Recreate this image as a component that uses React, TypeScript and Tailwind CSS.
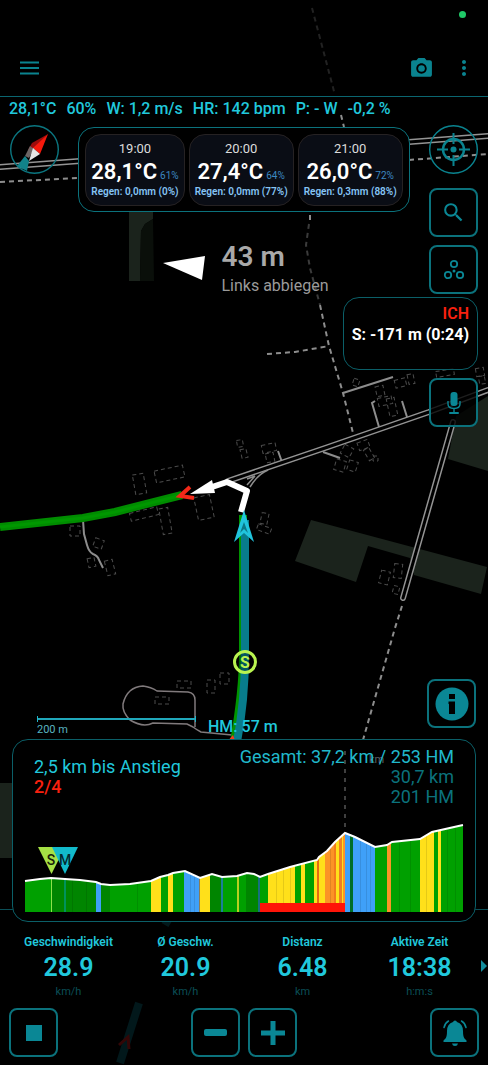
import React from "react";
import { MdCameraAlt, MdMoreVert, MdSearch } from "react-icons/md";

const forecast = [
  { time: "19:00", temp: "28,1°C", humidity: "61%", rain: "Regen: 0,0mm (0%)" },
  { time: "20:00", temp: "27,4°C", humidity: "64%", rain: "Regen: 0,0mm (77%)" },
  { time: "21:00", temp: "26,0°C", humidity: "72%", rain: "Regen: 0,3mm (88%)" },
];

const sensors = ["28,1°C", "60%", "W: 1,2 m/s", "HR: 142 bpm", "P: - W", "-0,2 %"];

const metrics = [
  { label: "Geschwindigkeit", value: "28.9", unit: "km/h" },
  { label: "Ø Geschw.", value: "20.9", unit: "km/h" },
  { label: "Distanz", value: "6.48", unit: "km" },
  { label: "Aktive Zeit", value: "18:38", unit: "h:m:s" },
];

// Building outlines: x, y, width, height, rotation
const buildings: number[][] = [
  [134, 474, 11, 20, -10], [155, 468, 29, 12, -12], [196, 496, 16, 23, -12],
  [130, 510, 28, 8, -14], [161, 508, 9, 26, -10], [70, 526, 10, 10, 0],
  [94, 539, 9, 9, 20], [88, 558, 7, 9, -12], [106, 560, 8, 15, -14],
  [237, 440, 6, 7, -10], [241, 449, 6, 9, -14], [262, 444, 14, 8, -12], [266, 453, 8, 9, -12],
  [261, 513, 7, 11, 12], [257, 526, 14, 6, 20], [342, 446, 10, 10, 28], [358, 441, 11, 8, -20],
  [335, 460, 10, 11, 16], [348, 461, 9, 10, 18], [366, 448, 6, 12, -30], [373, 456, 5, 5, 0],
  [376, 386, 8, 10, -12], [378, 397, 14, 8, -12], [388, 398, 8, 18, -12], [395, 379, 11, 8, -14],
  [408, 374, 6, 10, -12], [353, 379, 6, 7, 18], [436, 370, 18, 6, -10], [476, 368, 8, 8, -10],
  [479, 376, 6, 8, -10], [380, 571, 9, 13, 14], [394, 564, 8, 14, 6], [393, 586, 6, 8, 14],
  [177, 681, 14, 7, 0], [155, 697, 14, 7, 0], [207, 680, 8, 13, 0], [220, 673, 9, 11, 0],
];

const dark = "#008500";
const green = "#00a000";
const yellow = "#ffe01a";
const blue = "#3fa0f8";
const orange = "#fb9426";

// Slope bands of the elevation profile: start, end, colour
const bands: [number, number, string][] = [
  [25, 51, green], [51, 52, "#8fe04a"], [52, 64, dark], [64, 66, "#00935c"], [66, 96, dark],
  [96, 101, blue], [101, 110, dark], [110, 151, green], [151, 161, yellow], [161, 168, green],
  [168, 173, yellow], [173, 184, green], [184, 199, blue], [199, 200, "#8b7d55"],
  [200, 210, yellow], [210, 221, dark], [221, 223, "#1c7f9a"], [223, 237, green],
  [237, 239, "#b8d020"], [239, 246, green], [246, 258, dark], [258, 260, "#16707f"],
  [260, 268, green], [268, 295, yellow], [295, 301, green], [301, 305, yellow],
  [305, 314, green], [314, 317, yellow], [317, 319, "#e56b12"], [319, 325, yellow],
  [325, 334, orange], [334, 336, "#f27b1c"], [336, 339, yellow], [339, 342, "#ef7f20"],
  [342, 343, yellow], [343, 345, orange], [345, 350, blue], [350, 353, "#006e28"],
  [353, 375, blue], [375, 387, green], [387, 391, orange], [391, 420, green],
  [420, 434, yellow], [434, 438, green], [438, 441, yellow], [441, 463, green],
];

const profile =
  "25,881 40,879 51,878 65,879 80,880 96,882 101,884 110,885 130,884 151,881 160,877 168,875 173,873 185,871 200,878 212,874 222,877 237,876 247,873 254,874 260,877 268,874 290,867 317,860 319,857 327,851 335,842 345,833 355,837 375,847 387,845 392,842 420,839 432,832 463,825";

function MapCanvas() {
  return (
    <svg
      aria-hidden="true"
      className="absolute inset-0 h-full w-full"
      viewBox="0 0 488 1065"
      preserveAspectRatio="xMidYMid slice"
      fill="none"
    >
      <g fill="#1b231c">
        <polygon points="311,520 487,567 481,594 414,575 410,558 368,546 356,582 295,561" />
        <polygon points="456,416 488,396 488,471 448,459" />
        <polygon points="129,211 153,211 153,219 145,224 141,231 140,281 129,281" />
        <polygon fill="#0a0f0a" points="153,219 145,224 141,231 140,281 154,281" />
        <rect x="0" y="783" width="14" height="75" />
      </g>
      <g stroke="#4c4c4c" strokeDasharray="4 3">
        {buildings.map(([x, y, w, h, r], i) => (
          <rect key={i} x={x} y={y} width={w} height={h} transform={`rotate(${r} ${x + w / 2} ${y + h / 2})`} />
        ))}
      </g>
      <g stroke="#8d8d8d" strokeWidth="2">
        <path d="M83 520 84 534 87 545Q89 552 93 554 98 556 99 560L103 568" />
        <path d="M343 393 393 377M379 427 372 403 375 401M407 417 402 401M282 462 278 451M323 452 340 458" />
        <path strokeWidth="1.5" stroke="#807a7c" d="M232 735 201 732Q197 730 193 727L187 724 153 723Q143 728 130 720 122 712 123 704 127 687 143 686 151 687 157 691L188 692Q195 693 195 700V727" />
      </g>
      <g stroke="#8d8d8d" strokeWidth="2" strokeDasharray="5 4">
        <path d="M0 182 78 178M409 160 488 154" />
        <path d="M267 354 295 352 329 346M320 305 329 346 343 393 353 433" />
        <path d="M402 606 395 628 363 740" />
        <path stroke="#222" d="M312 8 321 42 335 95" />
        <path d="M341 115 344 127M310 215V221" />
        <path stroke="#3b3b3b" d="M309 224 306 245 310 268 320 305" />
      </g>
      <path stroke="#949494" strokeWidth="6" d="M0 167 80 161M409 142 488 136M228 481 328 447 429 412 488 390M453 422 403 598" strokeLinecap="round" />
      <path stroke="#000" strokeWidth="3" d="M0 167 80 161M409 142 488 136M228 481 328 447 429 412 488 390M453 422 403 598" strokeLinecap="round" />
      <path stroke="#8d8d8d" strokeWidth="1.5" d="M268 470Q258 474 250 487M255 476 247 479M255 476 247 485" />
      <path stroke="#008c00" strokeWidth="8" d="M0 527 83 518 115 512 182 495" />
      <path stroke="#00a300" strokeWidth="3" d="M0 527 83 518 115 512 182 495" opacity=".5" />
      <path stroke="#009400" strokeWidth="8" d="M243 515V655Q243 690 234 742" />
      <path stroke="#087c8c" strokeWidth="8" d="M245 520V655Q245 700 237 742" />
      <path stroke="#fff" strokeWidth="6" strokeLinejoin="round" d="M212 487 227 482 247 491 241 512" />
      <polygon fill="#fff" points="190,494 212,480 215,493" />
      <path stroke="#f22818" strokeWidth="4" d="M190 487 180 496 194 498" />
      <path fill="#20c4dd" d="M244 510 254 542 244 533 234 542Z" />
      <path fill="#0a7888" d="M244 522 248 533 244 529 240 533Z" />
      <circle cx="245" cy="662" r="10.5" fill="#000" fillOpacity=".3" stroke="#b9f34f" strokeWidth="3" />
      <text x="245" y="668" textAnchor="middle" fill="#b9f34f" fontSize="16" fontWeight="700">S</text>
      <polygon fill="#f23a22" points="226,743 233,735 236,743" />
      <g opacity=".2">
        <path stroke="#0a7888" strokeWidth="8" d="M168 920 165 925M139 1003 120 1063" />
        <path stroke="#f22" strokeWidth="3" d="M119 1045 128 1037 129 1049" />
      </g>
    </svg>
  );
}

const squareButton =
  "flex size-[49px] shrink-0 items-center justify-center rounded-lg border-2 border-[#0b727c] bg-black/80 text-[#0a8795]";

function SquareButton({ label, children }: { label: string; children: React.ReactNode }) {
  return (
    <button type="button" aria-label={label} className={squareButton}>
      {children}
    </button>
  );
}

function Compass() {
  return (
    <button type="button" aria-label="Kompass" className="size-[49px] shrink-0">
      <svg viewBox="10 125 49 49" className="size-full" fill="none">
        <circle cx="34.5" cy="149.500" r="23.800" stroke="#0b7680" strokeWidth="1.4" />
        <polygon fill="#9c0c0c" points="48,134 32,143 28,150 34,149" />
        <polygon fill="#f5190c" points="48,134 33,148 40,154" />
        <polygon fill="#6c6665" points="30,146 34,149 29,158 25,156" />
        <polygon fill="#e4e4e4" points="33,148 40,154 29,161" />
        <polygon fill="#11828a" points="25,156 29,161 27,171 17,166" />
      </svg>
    </button>
  );
}

function TargetIcon() {
  return (
    <svg viewBox="0 0 49 49" className="size-full" fill="none" stroke="#0a838f">
      <circle cx="24.500" cy="24.500" r="23.800" strokeWidth="1.4" />
      <circle cx="24.500" cy="24.500" r="10.500" strokeWidth="2.400" />
      <circle cx="24.500" cy="24.500" r="3" fill="#0a838f" stroke="none" />
      <path strokeWidth="2" d="M24.500 8V19M24.500 30V41M8 24.500H19M30 24.500H41" />
    </svg>
  );
}

function ElevationChart() {
  return (
    <svg viewBox="13 740 462 181" className="block h-auto w-full [grid-area:1/1]" fill="none" role="img" aria-label="Höhenprofil">
      <defs>
        <clipPath id="profile-area">
          <polygon points={`25,912 ${profile} 463,912`} />
        </clipPath>
      </defs>
      <g clipPath="url(#profile-area)" shapeRendering="crispEdges">
        {bands.map(([from, to, color]) => (
          <rect key={from} x={from} y="820" width={to - from} height="92" fill={color} />
        ))}
        <path stroke="#000" strokeOpacity=".1" d="M72 870V912M86 870V912M137 870V912M190 870V912M194 870V912M276 860V912M283 860V912M290 860V912M330 840V912M360 830V912M366 830V912M370 830V912M399 830V912M410 830V912M426 830V912M447 830V912M455 820V912" />
      </g>
      <rect x="260" y="903" width="85" height="9" fill="#ff1408" />
      <polyline points={profile} stroke="#fff" strokeWidth="2" />
      <path d="M345 751V832" stroke="#555" strokeWidth="1.500" strokeDasharray="4 5" />
      <text x="369" y="763" fill="#5b6164" fontSize="11">km</text>
      <polygon points="38,847 65,847 51.500,874" fill="#a5e145" />
      <polygon points="52,847 78,847 65,874" fill="#12bacb" />
      <text x="51" y="865" textAnchor="middle" fill="#16200a" fontSize="14" fontWeight="500">S</text>
      <text x="65" y="865" textAnchor="middle" fill="#042a30" fontSize="14" fontWeight="500">M</text>
    </svg>
  );
}

export default function App() {
  return (
    <div className="relative flex min-h-screen flex-col overflow-hidden bg-black font-[Roboto,'Liberation_Sans',sans-serif] text-[#20c8dc]">
      <MapCanvas />
      <span className="absolute top-[11px] right-[22px] size-[7px] rounded-full bg-[#20c968]" />

      <header className="relative border-b border-[#0b6670] pt-10">
        <div className="flex h-14 items-center justify-between pr-3 pl-5 text-[#0a838f]">
          <button type="button" aria-label="Menü">
            <svg viewBox="0 0 19 14" className="w-[19px]" stroke="currentColor" strokeWidth="2">
              <path d="M0 1.500H19M0 7H19M0 12.500H19" />
            </svg>
          </button>
          <div className="flex items-center gap-[18px]">
            <button type="button" aria-label="Kamera"><MdCameraAlt size={25} /></button>
            <button type="button" aria-label="Mehr"><MdMoreVert size={24} /></button>
          </div>
        </div>
      </header>

      <div className="relative flex h-6 items-center gap-[10px] pl-[9px] text-base font-medium whitespace-nowrap">
        {sensors.map((s) => (
          <span key={s}>{s}</span>
        ))}
      </div>

      <main className="relative flex flex-1 flex-col pt-1">
        <div className="flex justify-between pr-[10px] pl-[10px]">
          <Compass />
          <div className="flex flex-col items-center pt-[2px]">
            <section aria-label="Wetter" className="flex gap-1 rounded-2xl border border-[#0b727c] bg-black p-[6px] pb-[5px]">
              {forecast.map((f) => (
                <div key={f.time} className="flex flex-col items-center rounded-2xl border border-[#262223] bg-[#0a0d15] px-[5px] pt-1 pb-[6px] whitespace-nowrap">
                  <span className="text-[13px] leading-[20px] text-[#dcdcdc]">{f.time}</span>
                  <span className="flex items-baseline gap-[3px] text-[22px] leading-[26px] font-semibold text-white">
                    {f.temp}
                    <span className="text-[10px] leading-3 font-normal text-[#3c88c0]">{f.humidity}</span>
                  </span>
                  <span className="text-[10px] leading-[14px] font-semibold text-[#86c5f5]">{f.rain}</span>
                </div>
              ))}
            </section>
            <section aria-label="Abbiegehinweis" className="mt-[27px] flex items-center gap-4 pl-1">
              <svg viewBox="0 0 42 24" className="w-[42px]" aria-hidden="true">
                <polygon fill="#fff" points="0,7 42,0 39,24" />
              </svg>
              <div className="text-[#9b9b9b]">
                <p className="text-[28px] leading-9 font-semibold text-[#a9a9a9]">43 m</p>
                <p className="text-base leading-[22px]">Links abbiegen</p>
              </div>
            </section>
          </div>
          <div className="flex flex-col">
            <button type="button" aria-label="Zentrieren" className="mb-[14px] size-[49px]"><TargetIcon /></button>
            <SquareButton label="Suchen"><MdSearch size={25} /></SquareButton>
            <div className="h-2" />
            <SquareButton label="Gruppe">
              <svg viewBox="0 0 22 22" className="size-[22px]" fill="none" stroke="currentColor" strokeWidth="1.800">
                <circle cx="11" cy="5" r="3.200" />
                <circle cx="5" cy="16" r="3.200" />
                <circle cx="17" cy="16" r="3.200" />
                <circle cx="11" cy="12" r="1.500" fill="currentColor" stroke="none" />
              </svg>
            </SquareButton>
          </div>
        </div>

        <div className="flex flex-col items-end gap-2 pr-[10px]">
          <section className="h-[73px] rounded-2xl border border-[#0b5f68] bg-black/80 px-2 pt-[5px] text-right text-base leading-[21px] font-bold">
            <p className="font-semibold text-[#f9200f]">ICH</p>
            <p className="text-white">S: -171 m (0:24)</p>
          </section>
          <SquareButton label="Spracheingabe">
            <svg viewBox="0 0 16 24" className="h-6 w-4" fill="none" stroke="currentColor">
              <rect x="4.500" y="1" width="7" height="14" rx="3" fill="currentColor" stroke="none" />
              <path strokeWidth="1.400" d="M2 10V13Q2 17.500 8 17.500T14 13V10M8 17V21" />
              <path strokeWidth="2" strokeLinecap="round" d="M4 22H12" />
            </svg>
          </SquareButton>
        </div>

        <div className="mt-auto flex items-end justify-between pr-3 pl-[37px]">
          <div className="flex items-end gap-3">
            <div className="text-[11px] leading-3 text-[#58b4c0]">
              <div className="mb-[2px] h-1.5 w-[159px] border-x border-[#20b4c8] pt-[2px]">
                <div className="h-[2px] bg-[#20a8bb]" />
              </div>
              <p className="pb-[3px]">200 m</p>
            </div>
            <p className="pb-[2px] text-base leading-5 font-medium">HM: 57 m</p>
          </div>
          <div className="pb-[11px]">
            <SquareButton label="Information">
              <svg viewBox="0 0 34 34" className="size-[34px]">
                <circle cx="17" cy="17" r="16.500" fill="currentColor" />
                <path fill="#000" d="M14 7H20V12H14ZM13.500 14.500H20V27H14V17H13.500Z" />
              </svg>
            </SquareButton>
          </div>
        </div>

        <section className="relative z-10 mx-3 -mb-[13px] grid overflow-hidden rounded-2xl border border-[#0b5f68] bg-black">
          <ElevationChart />
          <div className="flex justify-between px-[21px] pt-[7px] text-lg leading-5 whitespace-nowrap [grid-area:1/1]">
            <div className="pt-[10px]">
              <p>2,5 km bis Anstieg</p>
              <p className="font-medium text-[#f9200f]">2/4</p>
            </div>
            <div className="text-right text-[#0b727c]">
              <p className="text-[#20b8cb]">Gesamt: 37,2 km / 253 HM</p>
              <p>30,7 km</p>
              <p>201 HM</p>
            </div>
          </div>
        </section>
      </main>

      <footer className="relative border-t border-[#0b4f57] pt-6 pb-2">
        <div className="grid grid-cols-4 px-2.5 text-center">
          {metrics.map((m) => (
            <div key={m.label}>
              <p className="text-xs leading-4 font-semibold">{m.label}</p>
              <p className="text-[25px] leading-9 font-semibold">{m.value}</p>
              <p className="text-[11px] leading-3 text-[#0a4e56]">{m.unit}</p>
            </div>
          ))}
        </div>
        <button type="button" aria-label="Weiter" className="absolute top-[50px] right-px">
          <svg viewBox="0 0 6 12" className="h-3 w-1.5"><path fill="#138c9c" d="M0 0 6 6 0 12Z" /></svg>
        </button>
        <div className="mt-[10px] grid grid-cols-[1fr_auto_1fr] items-center px-[9px]">
          <SquareButton label="Stopp"><span className="size-4 bg-current" /></SquareButton>
          <div className="flex gap-2">
            <SquareButton label="Verkleinern"><span className="h-[7px] w-[23px] rounded-xs bg-current" /></SquareButton>
            <SquareButton label="Vergrößern">
              <svg viewBox="0 0 24 24" className="size-6" fill="currentColor"><path d="M9.500 0H14.500V9.500H24V14.500H14.500V24H9.500V14.500H0V9.500H9.500Z" /></svg>
            </SquareButton>
          </div>
          <div className="flex justify-end">
            <SquareButton label="Alarm">
              <svg viewBox="0 0 24 26" className="h-[26px] w-6" fill="currentColor">
                <path d="M12 .5Q13.500 .5 14 2 20 4 20 11 20 16.500 21.500 18.500L23.500 20.500V22H.5V20.500L2.500 18.500Q4 16.500 4 11 4 4 10 2 10.500 .5 12 .5ZM9 23.500H15Q14.500 26 12 26T9 23.500Z" />
                <path fill="none" stroke="currentColor" strokeWidth="1.500" strokeLinecap="round" d="M5.500 1Q2 3 1 7.500M18.500 1Q22 3 23 7.500" />
              </svg>
            </SquareButton>
          </div>
        </div>
      </footer>
    </div>
  );
}
